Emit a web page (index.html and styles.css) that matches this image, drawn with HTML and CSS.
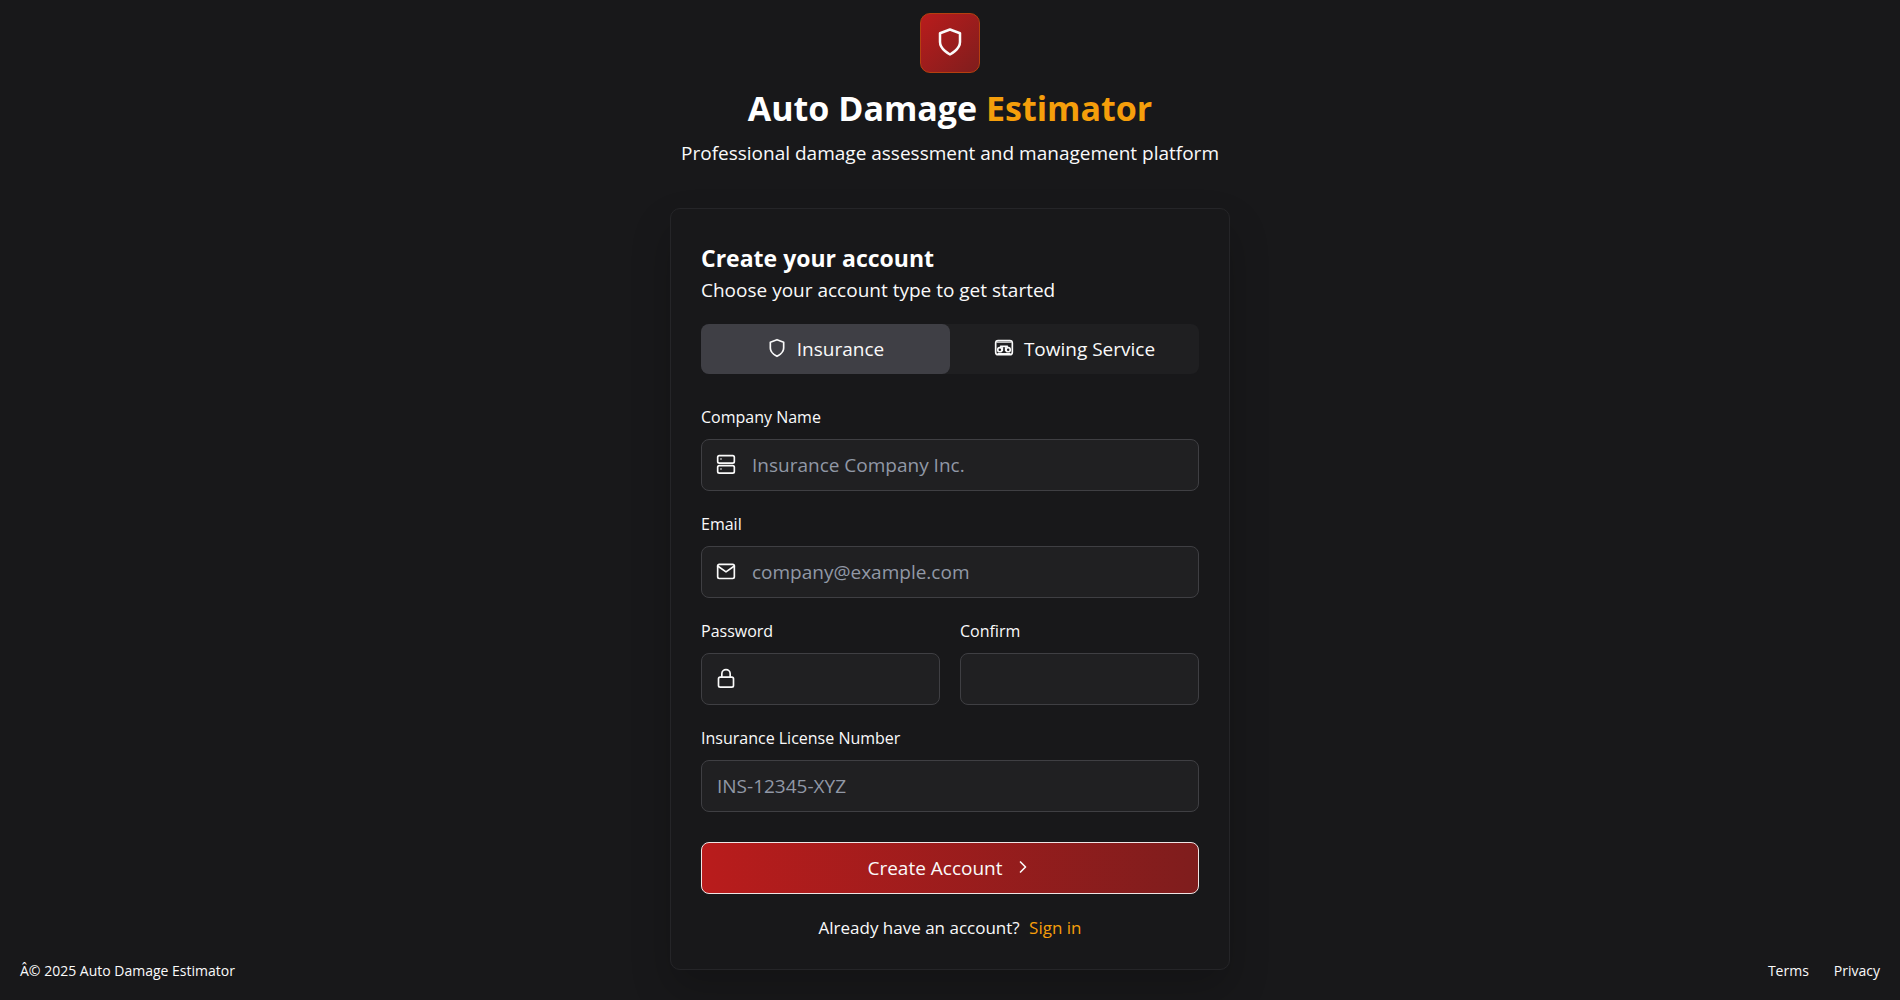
FILE: index.html
```html
<!DOCTYPE html>
<html lang="en">
	<head>
		<meta charset="utf-8">
		<meta name="viewport" content="width=device-width, initial-scale=1">
		<title>Auto Damage Estimator</title>
		<link rel="stylesheet" href="styles.css">
	</head>
	<body>
		<header class="brand">
			<div class="logo">
				<svg class="icon" viewBox="0 0 24 24"><path d="M12 22s8-4 8-10V5l-8-3-8 3v7c0 6 8 10 8 10z"/></svg>
			</div>
			<h1>Auto Damage <span>Estimator</span></h1>
			<p>Professional damage assessment and management platform</p>
		</header>

		<main class="card">
			<h2>Create your account</h2>
			<p class="intro">Choose your account type to get started</p>

			<div class="tabs">
				<button type="button" class="tab active">
					<svg class="icon" viewBox="0 0 24 24"><path d="M12 22s8-4 8-10V5l-8-3-8 3v7c0 6 8 10 8 10z"/></svg>
					Insurance
				</button>
				<button type="button" class="tab">
					<svg class="icon" viewBox="0 0 24 24"><rect x="2" y="3" width="20" height="17" rx="3"/><path d="M4 5h16" opacity="0.7"/><path d="M8 10h8M5 19h14M10 12v3M14 12v3"/><circle cx="7" cy="14" r="2.500"/><circle cx="17" cy="14" r="2.500"/></svg>
					Towing Service
				</button>
			</div>

			<form>
				<div class="field">
					<label for="company">Company Name</label>
					<div class="control has-icon">
						<svg class="icon" viewBox="0 0 24 24"><rect x="2" y="2" width="20" height="9" rx="2"/><rect x="2" y="14" width="20" height="9" rx="2"/><path d="M6 6h.01M6 18h.01"/></svg>
						<input type="text" id="company" placeholder="Insurance Company Inc.">
					</div>
				</div>
				<div class="field">
					<label for="email">Email</label>
					<div class="control has-icon">
						<svg class="icon" viewBox="0 0 24 24"><rect x="2" y="4" width="20" height="17" rx="2"/><path d="M2 6l10 7 10-7"/></svg>
						<input type="email" id="email" placeholder="company@example.com">
					</div>
				</div>
				<div class="row">
					<div class="field">
						<label for="password">Password</label>
						<div class="control has-icon">
							<svg class="icon" viewBox="0 0 24 24"><rect x="3" y="11" width="18" height="12" rx="2"/><path d="M7 11V7a5 5 0 0 1 10 0v4"/></svg>
							<input type="password" id="password">
						</div>
					</div>
					<div class="field">
						<label for="confirm">Confirm</label>
						<div class="control">
							<input type="password" id="confirm">
						</div>
					</div>
				</div>
				<div class="field">
					<label for="license">Insurance License Number</label>
					<div class="control">
						<input type="text" id="license" placeholder="INS-12345-XYZ">
					</div>
				</div>
				<button type="submit" class="submit">
					Create Account
					<svg class="icon" viewBox="0 0 24 24"><path d="M9 18l6-6-6-6"/></svg>
				</button>
			</form>

			<p class="signin">Already have an account? <a href="#">Sign in</a></p>
		</main>

		<footer class="footer">
			<span>Â© 2025 Auto Damage Estimator</span>
			<nav>
				<a href="#">Terms</a>
				<a href="#">Privacy</a>
			</nav>
		</footer>
	</body>
</html>
```

FILE: styles.css
```css
*{ margin:0; padding:0; box-sizing:border-box;}
body{
	position:relative;
	min-height:100vh;
	padding:13px 20px 30px;
	background:#18181a;
	color:#fafafa;
	font-family:"Segoe UI","Open Sans","Noto Sans",sans-serif;
	font-size:19px;
}
a{
	color:inherit;
	text-decoration:none;
}
button,
input{
	color:inherit;
	font:inherit;
}
button{
	cursor:pointer;
}
.icon{
	flex:none;
	width:20px;
	height:20px;
	margin-bottom:2px;
	fill:none;
	stroke:currentColor;
	stroke-width:2;
	stroke-linecap:round;
	stroke-linejoin:round;
}

/* brand */
.brand{
	text-align:center;
}
.logo{
	display:flex;
	align-items:center;
	justify-content:center;
	width:60px;
	height:60px;
	margin:0 auto 10px;
	border:1px solid #b5400f;
	border-radius:10px;
	background:linear-gradient(135deg,#b91c1c,#7f1d1d);
}
.logo .icon{
	width:30px;
	height:30px;
}
.brand h1{
	margin-bottom:5px;
	color:#fff;
	font-size:34px;
	line-height:50px;
	font-weight:700;
}
.brand h1 span{
	color:#f59e0b;
}
.brand p{
	line-height:30px;
}

/* card */
.card{
	max-width:560px;
	margin:40px auto 0;
	padding:30px 30px 28px;
	border:1px solid #252528;
	border-radius:10px;
	box-shadow:0 20px 40px rgba(0,0,0,0.2);
}
.card h2{
	color:#fff;
	font-size:23px;
	line-height:38px;
	font-weight:700;
}
.intro{
	line-height:27px;
}
.tabs{
	display:grid;
	grid-template-columns:1fr 1fr;
	margin:20px 0 30px;
	border-radius:8px;
	background:#1f1f21;
}
.tab{
	display:flex;
	align-items:center;
	justify-content:center;
	gap:10px;
	height:50px;
	border:0;
	border-radius:8px;
	background:none;
}
.tab.active{
	background:#3f3f45;
}

/* form */
.field{
	min-width:0;
	margin-bottom:20px;
}
.row{
	display:grid;
	grid-template-columns:1fr 1fr;
	gap:20px;
}
label{
	display:block;
	margin-bottom:8px;
	font-size:16px;
	line-height:27px;
}
.control{
	display:flex;
	align-items:center;
	height:52px;
	padding:0 15px;
	border:1px solid #3f3f43;
	border-radius:8px;
	background:#202022;
}
.has-icon{
	gap:16px;
	padding-left:14px;
}
.control input{
	flex:1;
	min-width:0;
	height:50px;
	border:0;
	outline:0;
	background:none;
}
.control:focus-within{
	border-color:#f59e0b;
}
.control input::placeholder{
	color:#9198a6;
	opacity:1;
}
.submit{
	display:flex;
	align-items:center;
	justify-content:center;
	gap:10px;
	width:100%;
	height:52px;
	margin:30px 0 20px;
	border:1px solid #f0e4e4;
	border-radius:8px;
	background:linear-gradient(90deg,#b91c1c,#7f1d1d);
}
.signin{
	font-size:17px;
	line-height:27px;
	text-align:center;
}
.signin a{
	margin-left:5px;
	color:#f59e0b;
}

/* footer runs over the foot of the page */
.footer{
	position:absolute;
	left:0;
	right:0;
	bottom:19px;
	display:flex;
	justify-content:space-between;
	padding:0 20px;
	font-size:14px;
	line-height:20px;
}
.footer nav{
	display:flex;
	gap:25px;
}
```
